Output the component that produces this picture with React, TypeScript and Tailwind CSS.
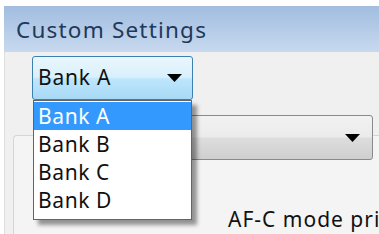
const font = { fontFamily: '"Noto Sans", "Open Sans", sans-serif' };

function Arrow() {
  return (
    <svg width="15" height="8" viewBox="0 0 15 8" className="shrink-0">
      <path d="M0 0 H15 L7.5 8 Z" fill="#000" />
    </svg>
  );
}

export default function App() {
  return (
    <div
      className="w-[379px] h-[234px] bg-white pt-[6px] pl-[4px] overflow-hidden"
      style={font}
    >
      <div className="flex flex-col h-full">
        {/* Title bar */}
        <div className="h-[46px] shrink-0 bg-gradient-to-b from-[#a2bde0] to-[#c7d9ef] flex items-center pl-[12px]">
          <span className="text-[22.5px] leading-none text-[#1e395b] mt-[2px] tracking-[1.2px]">Custom Settings</span>
        </div>

        {/* Body */}
        <div className="relative flex-1 flex flex-col bg-[#f0f0f0] border-l border-[#dfdfdf]">
          {/* Bank combo (focused) */}
          <div className="ml-[27px] mt-[4px] w-[161px] h-[44px] shrink-0 rounded-[3px] border border-[#3c7fb1] bg-[linear-gradient(to_bottom,#eaf6fd_0%,#d9f0fc_48%,#bee6fd_52%,#a7d9f5_100%)] flex items-center justify-between pl-[5px] pr-[10px]">
            <span className="text-[21px] text-[#111] tracking-[0.8px]">Bank A</span>
            <Arrow />
          </div>

          {/* Settings panel with second combo */}
          <div className="ml-[8px] mt-[35px] flex-1 border-l border-t border-[#d5d5d5] rounded-tl-[4px] bg-[#f4f4f4] flex flex-col">
            <div className="-mt-[21px] ml-auto mr-[6px] w-[222px] h-[45px] rounded-[3px] border border-[#8a8a8a] bg-[linear-gradient(to_bottom,#f2f2f2_0%,#ebebeb_48%,#dddddd_52%,#cfcfcf_100%)] flex items-center justify-end pr-[12px]">
              <Arrow />
            </div>
            <div className="ml-[214px] mt-[49px] text-[21px] leading-none text-[#111] tracking-[1px] whitespace-nowrap">AF-C mode pri</div>
          </div>

          {/* Open dropdown list */}
          <div className="absolute left-[28px] top-[48px] w-[159px] bg-white border border-[#646464] shadow-[5px_5px_4px_rgba(0,0,0,0.4)] flex flex-col py-[1px]">
            <div className="h-[28px] bg-[#3399ff] text-white text-[21px] leading-[28px] pl-[4px] tracking-[0.6px]">Bank A</div>
            <div className="h-[28px] text-[#111] text-[21px] leading-[28px] pl-[4px] tracking-[0.6px]">Bank B</div>
            <div className="h-[28px] text-[#111] text-[21px] leading-[28px] pl-[4px] tracking-[0.6px]">Bank C</div>
            <div className="h-[28px] text-[#111] text-[21px] leading-[28px] pl-[4px] tracking-[0.6px]">Bank D</div>
            <div className="h-[4px]" />
          </div>
        </div>
      </div>
    </div>
  );
}
